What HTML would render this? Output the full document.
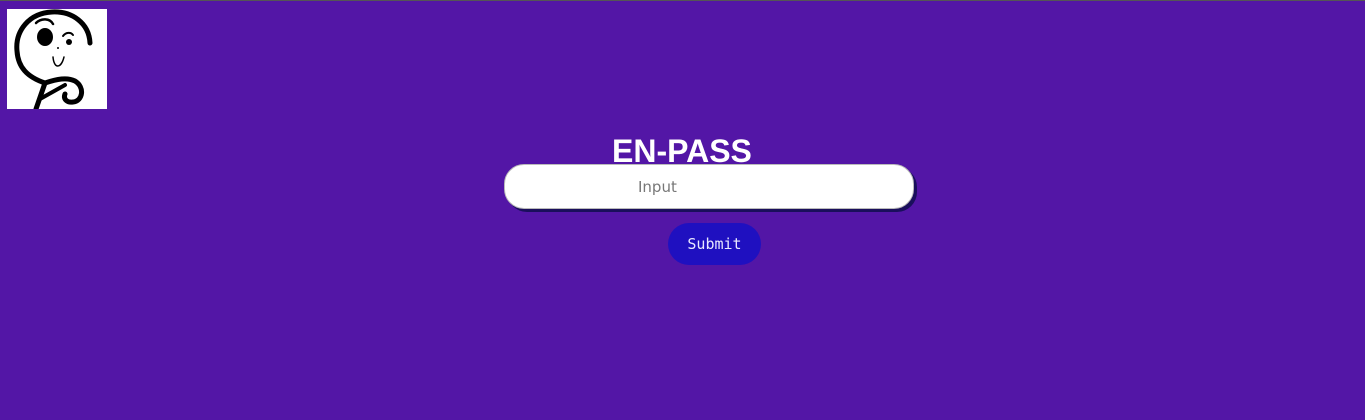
<!DOCTYPE html>
<html><head><style>
html,body{margin:0;padding:0;width:1365px;height:420px;overflow:hidden;background:#5316a6;}
body{position:relative;}
.top{position:absolute;left:0;top:0;width:1365px;height:1px;background:#555;}
.logo{position:absolute;left:7px;top:9px;width:100px;height:100px;background:#fff;}
h1{position:absolute;left:612px;top:133px;margin:0;font:bold 32px/36px "Liberation Sans",sans-serif;color:#fff;}
.inp{position:absolute;left:504px;top:164px;width:408px;height:43px;background:#fff;border:1px solid #bbb;border-radius:20px;box-shadow:3px 3px 0 #1a0f5c;}
.inp span{position:absolute;left:133px;top:13px;font:15px "DejaVu Sans",sans-serif;color:#777;}
.btn{position:absolute;left:668px;top:223px;width:93px;height:42px;background:#1f10c0;border-radius:21px;color:#e8e8ff;font:15px "DejaVu Sans Mono","Liberation Mono",monospace;text-align:center;line-height:42px;}
</style></head><body>
<div class="top"></div>
<div class="logo"><svg width="100" height="100" viewBox="0 0 100 100">
<g fill="none" stroke="#000" stroke-width="5" stroke-linecap="round">
<path d="M83 34 C82 14 65 2 45 3 C22 4 8 22 10 42 C11 58 20 68 38 74 C50 70 60 68 68 72 C78 78 76 92 66 93 C60 94 56 90 58 85"/>
<path d="M38 74 L29 100"/>
<path d="M33 90 L58 76" stroke-width="4"/>
<path d="M29 14 C34 9 43 9 46 15" stroke-width="2.5"/>
<path d="M56 27 C59 23 64 23 66 26" stroke-width="2"/>
<path d="M46 48 C47 60 54 60 57 48" stroke-width="1.5"/>
</g>
<ellipse cx="38" cy="28" rx="8" ry="9" fill="#000"/>
<circle cx="62" cy="33" r="3" fill="#000"/>
<circle cx="51" cy="39" r="1" fill="#000"/>
</svg></div>
<h1>EN-PASS</h1>
<div class="inp"><span>Input</span></div>
<div class="btn">Submit</div>
</body></html>
